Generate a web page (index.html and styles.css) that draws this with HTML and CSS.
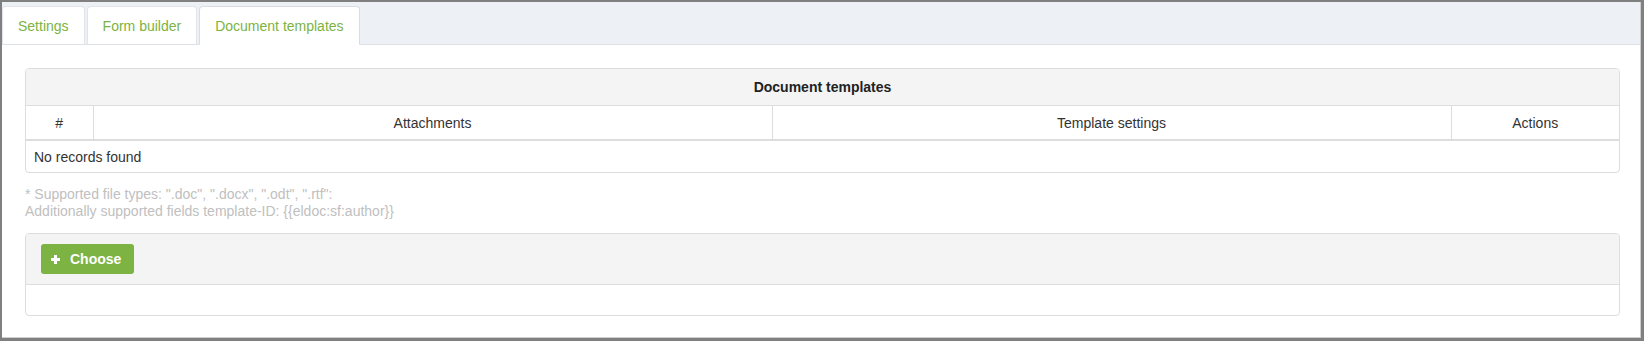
FILE: index.html
```html
<!DOCTYPE html>
<html lang="en">
<head>
<meta charset="utf-8">
<title>Document templates</title>
<link rel="stylesheet" href="styles.css">
</head>
<body>
<div class="frame">
  <div class="frame-inner">
    <nav class="tabs">
      <a class="tab">Settings</a>
      <a class="tab">Form builder</a>
      <a class="tab active">Document templates</a>
    </nav>
    <main class="content">
      <section class="panel">
        <div class="panel-heading">Document templates</div>
        <table class="grid">
          <colgroup>
            <col class="c-num">
            <col>
            <col>
            <col class="c-act">
          </colgroup>
          <thead>
            <tr>
              <th>#</th>
              <th>Attachments</th>
              <th>Template settings</th>
              <th>Actions</th>
            </tr>
          </thead>
          <tbody>
            <tr>
              <td colspan="4" class="empty">No records found</td>
            </tr>
          </tbody>
        </table>
      </section>
      <p class="note">* Supported file types: ".doc", ".docx", ".odt", ".rtf":<br>Additionally supported fields template-ID: {{eldoc:sf:author}}</p>
      <section class="panel upload">
        <div class="upload-heading">
          <button class="btn-choose" type="button">
            <svg class="plus" width="9" height="9" viewBox="0 0 9 9" aria-hidden="true">
              <rect x="3" y="0" width="3" height="9" fill="#fff"/>
              <rect x="0" y="3" width="9" height="3" fill="#fff"/>
            </svg>
            <span>Choose</span>
          </button>
        </div>
        <div class="upload-body"></div>
      </section>
    </main>
  </div>
</div>
</body>
</html>
```

FILE: styles.css
```css
* {
  box-sizing: border-box;
}

html, body {
  margin: 0;
  padding: 0;
  background: #ffffff;
}

body {
  font-family: "Liberation Sans", Arial, sans-serif;
  font-size: 14px;
  color: #333333;
}

.frame {
  width: 1644px;
  height: 341px;
  border-style: solid;
  border-color: #808080;
  border-width: 2px 3px 3px 2px;
}

.frame-inner {
  height: 100%;
  border-right: 1px solid #cfcfcf;
  border-bottom: 1px solid #cfcfcf;
  display: flex;
  flex-direction: column;
}

.tabs {
  display: flex;
  gap: 2px;
  padding-top: 4px;
  background: #edf0f5;
  border-bottom: 1px solid #dde0e5;
  height: 43px;
}

.tab {
  display: block;
  height: 39px;
  line-height: 38px;
  padding: 0 15px;
  background: #ffffff;
  color: #7cb342;
  border: 1px solid #e1e4e9;
  border-radius: 4px 4px 0 0;
  margin-bottom: -1px;
  border-bottom-color: #dde0e5;
  cursor: pointer;
}

.tab.active {
  border-color: #d9dce1;
  border-bottom-color: #ffffff;
}

.content {
  flex: 1;
  padding: 23px 20px 0 23px;
}

.panel {
  border: 1px solid #dddddd;
  border-radius: 4px;
  overflow: hidden;
  background: #ffffff;
}

.panel-heading {
  height: 37px;
  line-height: 36px;
  background: #f4f4f4;
  border-bottom: 1px solid #dddddd;
  text-align: center;
  font-weight: bold;
  color: #222222;
}

.grid {
  width: 100%;
  border-collapse: collapse;
  table-layout: fixed;
}

.c-num {
  width: 67px;
}

.c-act {
  width: 168px;
}

.grid th {
  height: 34px;
  font-weight: normal;
  text-align: center;
  padding: 0 8px;
  border-left: 1px solid #dddddd;
  border-bottom: 2px solid #dddddd;
  color: #333333;
}

.grid th:first-child {
  border-left: none;
}

.grid td.empty {
  height: 32px;
  padding: 0 8px;
  text-align: left;
}

.note {
  margin: 13px 0 13px;
  line-height: 17px;
  color: #c0c0c0;
}

.upload-heading {
  background: #f4f4f4;
  border-bottom: 1px solid #dddddd;
  padding: 10px 15px;
}

.btn-choose {
  display: inline-flex;
  align-items: center;
  height: 30px;
  padding: 0 13px 0 10px;
  border: none;
  border-radius: 3px;
  background: #7cb342;
  color: #ffffff;
  font-family: "Liberation Sans", Arial, sans-serif;
  font-size: 14px;
  font-weight: bold;
  cursor: pointer;
}

.plus {
  margin-right: 10px;
  display: block;
}

.upload-body {
  height: 30px;
}
```
